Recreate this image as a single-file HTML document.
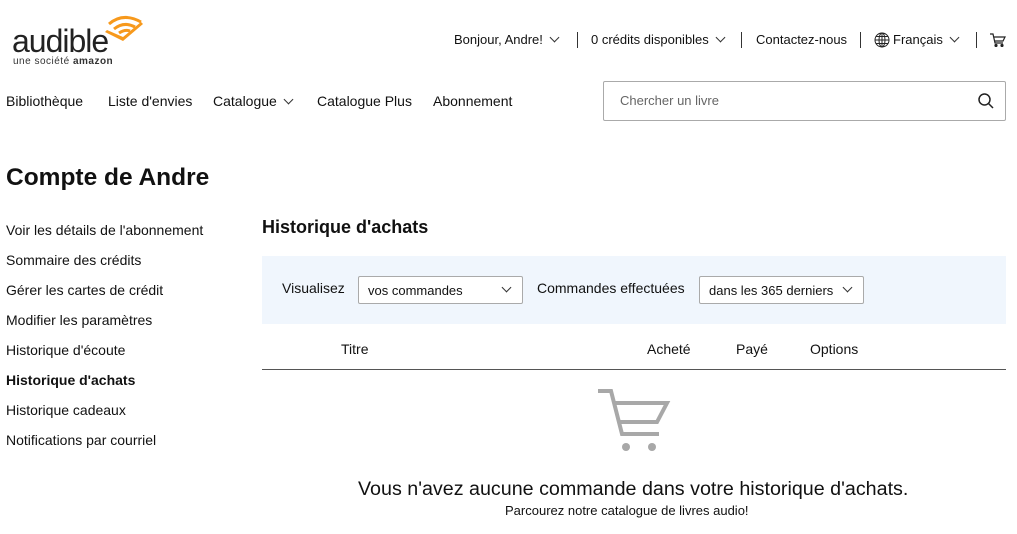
<!DOCTYPE html>
<html><head><meta charset="utf-8"><style>
*{margin:0;padding:0;box-sizing:border-box}
body{width:1017px;height:534px;overflow:hidden;background:#fff;font-family:"Liberation Sans",sans-serif;color:#111;position:relative}
.a{position:absolute;white-space:nowrap}
.t{font-size:14px}
.chev{display:inline-block;width:7px;height:7px;border-right:1.3px solid #333;border-bottom:1.3px solid #333;transform:rotate(45deg);margin-left:8px;position:relative;top:-3px}
.sep{position:absolute;width:1px;height:16px;background:#333;top:32px}
.side{font-size:14px;position:absolute;left:6px}
.sel{position:absolute;height:28px;border:1px solid #aaa;border-radius:2px;font-size:13px;padding:6px 9px;background:#fff}
.sel .chev{position:absolute;right:12px;top:7px}
</style></head><body>
<div class="a" style="left:12px;top:23px;font-size:32px;letter-spacing:-1px;color:#222;font-weight:400">audible</div>
<svg class="a" style="left:101px;top:12px" width="44" height="30" viewBox="0 0 44 30"><g fill="none" stroke="#f7991c" stroke-width="3"><path d="M8 12 Q22 0 40 10"/><path d="M13 17 Q23 9 34 15"/><path d="M18 21 Q24 17 29 19"/></g><path d="M4 20 L22 29 L42 12 L40 10 L22 25 L6 18Z" fill="#f7991c"/></svg>
<div class="a" style="left:13px;top:56px;font-size:10px;color:#333;letter-spacing:0.5px">une société <b>amazon</b></div>

<div class="a t" style="left:454px;top:32px;font-size:13px">Bonjour, Andre!<span class="chev"></span></div>
<div class="sep" style="left:577px"></div>
<div class="a t" style="left:591px;top:32px;font-size:13px">0 crédits disponibles<span class="chev"></span></div>
<div class="sep" style="left:741px"></div>
<div class="a t" style="left:756px;top:32px;font-size:13px">Contactez-nous</div>
<div class="sep" style="left:860px"></div>
<svg class="a" style="left:874px;top:32px" width="16" height="16" viewBox="0 0 16 16" fill="none" stroke="#222" stroke-width="1"><circle cx="8" cy="8" r="7"/><ellipse cx="8" cy="8" rx="3" ry="7"/><path d="M1 8H15M2 4.5H14M2 11.5H14M8 1V15"/></svg>
<div class="a t" style="left:893px;top:32px;font-size:13px">Français<span class="chev"></span></div>
<div class="sep" style="left:976px"></div>
<svg class="a" style="left:990px;top:33px" width="16" height="14" viewBox="0 0 16 14" fill="none" stroke="#222" stroke-width="1.2"><path d="M0 1H3L5 10H13M4 4H15L13 8H5"/><circle cx="6" cy="12.5" r="1" fill="#222"/><circle cx="12" cy="12.5" r="1" fill="#222"/></svg>

<div class="a t" style="left:6px;top:93px">Bibliothèque</div>
<div class="a t" style="left:108px;top:93px">Liste d'envies</div>
<div class="a t" style="left:213px;top:93px">Catalogue<span class="chev"></span></div>
<div class="a t" style="left:317px;top:93px">Catalogue Plus</div>
<div class="a t" style="left:433px;top:93px">Abonnement</div>
<div class="a" style="left:603px;top:81px;width:403px;height:40px;border:1px solid #aaa;border-radius:2px"></div>
<div class="a" style="left:620px;top:93px;font-size:13px;color:#666">Chercher un livre</div>
<svg class="a" style="left:978px;top:93px" width="16" height="16" viewBox="0 0 16 16" fill="none" stroke="#222" stroke-width="1.5"><circle cx="6.5" cy="6.5" r="5.5"/><path d="M10.5 10.5L15 15"/></svg>

<div class="a" style="left:6px;top:164px;font-size:24.5px;font-weight:bold">Compte de Andre</div>
<div class="side" style="top:222px">Voir les détails de l'abonnement</div>
<div class="side" style="top:252px">Sommaire des crédits</div>
<div class="side" style="top:282px">Gérer les cartes de crédit</div>
<div class="side" style="top:312px">Modifier les paramètres</div>
<div class="side" style="top:342px">Historique d'écoute</div>
<div class="side" style="top:372px;font-weight:bold">Historique d'achats</div>
<div class="side" style="top:402px">Historique cadeaux</div>
<div class="side" style="top:432px">Notifications par courriel</div>

<div class="a" style="left:262px;top:217px;font-size:18px;font-weight:bold">Historique d'achats</div>
<div class="a" style="left:262px;top:256px;width:744px;height:68px;background:#f0f6fd"></div>
<div class="a t" style="left:282px;top:280px">Visualisez</div>
<div class="sel" style="left:358px;top:276px;width:165px">vos commandes<span class="chev"></span></div>
<div class="a t" style="left:537px;top:280px">Commandes effectuées</div>
<div class="sel" style="left:699px;top:276px;width:165px">dans les 365 derniers<span class="chev"></span></div>

<div class="a t" style="left:341px;top:341px">Titre</div>
<div class="a t" style="left:647px;top:341px">Acheté</div>
<div class="a t" style="left:736px;top:341px">Payé</div>
<div class="a t" style="left:810px;top:341px">Options</div>
<div class="a" style="left:262px;top:369px;width:744px;height:1px;background:#555"></div>

<svg class="a" style="left:580px;top:380px" width="110" height="80" viewBox="580 380 110 80" fill="none" stroke="#a8a8a8" stroke-width="4"><path d="M598 391H611L622 434H659M613 403H667L657 422H619"/><circle cx="626" cy="447" r="4" fill="#a8a8a8" stroke="none"/><circle cx="652" cy="447" r="4" fill="#a8a8a8" stroke="none"/></svg>

<div class="a" style="left:358px;top:478px;font-size:19.7px">Vous n'avez aucune commande dans votre historique d'achats.</div>
<div class="a" style="left:505px;top:503px;font-size:13px">Parcourez notre catalogue de livres audio!</div>
</body></html>
